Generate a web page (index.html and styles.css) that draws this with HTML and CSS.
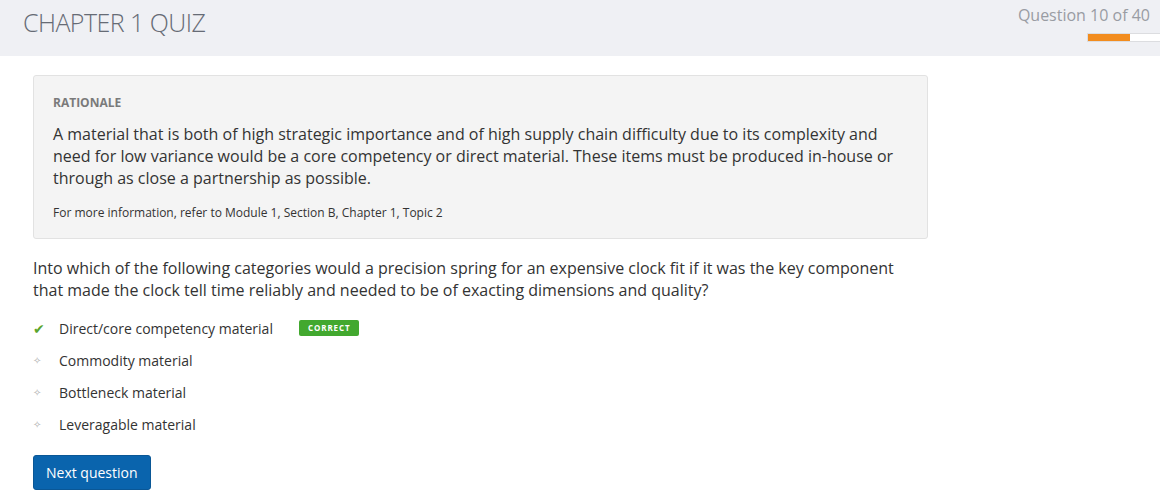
FILE: index.html
```html
<!DOCTYPE html>
<html>
<head>
<meta charset="utf-8">
<link rel="stylesheet" href="styles.css">
</head>
<body>
<header class="topbar">
  <h1 class="title">CHAPTER 1 QUIZ</h1>
  <div class="progress">
    <div class="progress-label">Question 10 of 40</div>
    <div class="progress-track"><div class="progress-fill"></div></div>
  </div>
</header>
<main class="content">
  <section class="rationale">
    <div class="rationale-head">RATIONALE</div>
    <p class="rationale-text">A material that is both of high strategic importance and of high supply chain difficulty due to its complexity and need for low variance would be a core competency or direct material. These items must be produced in-house or through as close a partnership as possible.</p>
    <p class="rationale-ref">For more information, refer to Module 1, Section B, Chapter 1, Topic 2</p>
  </section>
  <p class="question">Into which of the following categories would a precision spring for an expensive clock fit if it was the key component that made the clock tell time reliably and needed to be of exacting dimensions and quality?</p>
  <ul class="answers">
    <li class="answer"><span class="mark check">&#10004;</span><span class="answer-text">Direct/core competency material</span><span class="badge">CORRECT</span></li>
    <li class="answer"><span class="mark dot">&#10023;</span><span class="answer-text">Commodity material</span></li>
    <li class="answer"><span class="mark dot">&#10023;</span><span class="answer-text">Bottleneck material</span></li>
    <li class="answer"><span class="mark dot">&#10023;</span><span class="answer-text">Leveragable material</span></li>
  </ul>
  <button class="next-btn">Next question</button>
</main>
</body>
</html>
```
FILE: styles.css
```css
html, body {
  margin: 0;
  padding: 0;
  background: #ffffff;
  font-family: "Open Sans", "Noto Sans", sans-serif;
  color: #3b3b3b;
}
.topbar {
  height: 56px;
  background: #eff0f4;
  display: flex;
  justify-content: space-between;
  align-items: flex-start;
}
.title {
  margin: 6px 0 0 23px;
  font-size: 25px;
  font-weight: 300;
  color: #666b75;
  letter-spacing: -0.55px;
  line-height: 32px;
}
.progress {
  display: flex;
  flex-direction: column;
  align-items: flex-end;
  padding-top: 5px;
}
.progress-label {
  font-size: 16px;
  color: #999ca3;
  line-height: 20px;
  margin-right: 10px;
}
.progress-track {
  margin-top: 8px;
  width: 72px;
  height: 7px;
  background: #ffffff;
  border: 1px solid #dcdde0;
  border-right: none;
}
.progress-fill {
  width: 42px;
  height: 100%;
  background: #f28c1e;
}
.content {
  padding: 19px 33px 0 33px;
}
.rationale {
  width: 854px;
  background: #f4f4f4;
  border: 1px solid #e2e2e2;
  border-radius: 3px;
  padding: 19px 20px 17px 19px;
}
.rationale-head {
  font-size: 12px;
  font-weight: 700;
  color: #7a7a7a;
  line-height: 16px;
}
.rationale-text {
  margin: 12px 0 0 0;
  font-size: 16px;
  line-height: 22px;
  color: #333333;
}
.rationale-ref {
  margin: 16px 0 0 0;
  font-size: 12px;
  line-height: 16px;
  color: #333333;
}
.question {
  margin: 18px 0 0 0;
  width: 880px;
  font-size: 16px;
  line-height: 22px;
  color: #333333;
}
.answers {
  list-style: none;
  margin: 11px 0 0 0;
  padding: 0;
}
.answer {
  display: flex;
  align-items: center;
  height: 32px;
  font-size: 14px;
  color: #333333;
}
.mark {
  width: 26px;
  flex: none;
}
.check {
  color: #5aa52d;
  font-size: 14px;
}
.dot {
  color: #b0b0b0;
  font-size: 10px;
}
.badge {
  margin-left: 26px;
  background: #42a82f;
  color: #ffffff;
  font-size: 8px;
  font-weight: 700;
  letter-spacing: 0.9px;
  padding: 0 9px;
  height: 16px;
  line-height: 16px;
  border-radius: 2px;
}
.next-btn {
  margin-top: 15px;
  background: #0a64ad;
  color: #ffffff;
  border: 1px solid #0a5796;
  border-radius: 3px;
  font-family: "Open Sans", "Noto Sans", sans-serif;
  font-size: 14px;
  height: 35px;
  padding: 0 12px;
  cursor: pointer;
}
```
